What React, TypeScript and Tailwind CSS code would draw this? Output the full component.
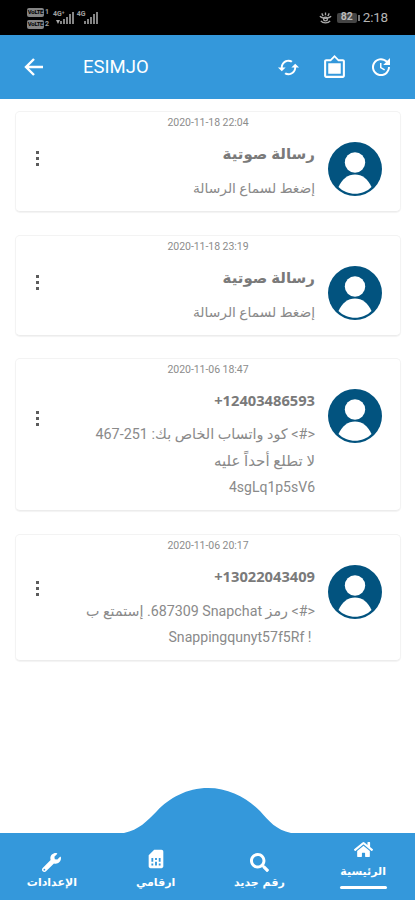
import { FaHome, FaSearch, FaWrench } from "react-icons/fa";
import { MdCached, MdFilterFrames, MdSimCard, MdUpdate } from "react-icons/md";

interface Line {
  text: string;
  size: string;
}

interface Message {
  date: string;
  title: string;
  lines: Line[];
  height: string;
  dots: string;
  phone?: boolean;
}

const messages: Message[] = [
  {
    date: "2020-11-18 22:04",
    title: "رسالة صوتية",
    lines: [{ text: "إضغط لسماع الرسالة", size: "text-[13.800px]" }],
    height: "h-[101px]",
    dots: "mt-[39px]",
  },
  {
    date: "2020-11-18 23:19",
    title: "رسالة صوتية",
    lines: [{ text: "إضغط لسماع الرسالة", size: "text-[13.800px]" }],
    height: "h-[101px]",
    dots: "mt-[39px]",
  },
  {
    date: "2020-11-06 18:47",
    title: "+12403486593",
    lines: [
      { text: "<#> كود واتساب الخاص بك: 251-467", size: "text-[14.400px]" },
      { text: "لا تطلع أحداً عليه", size: "text-[15px]" },
      { text: "4sgLq1p5sV6", size: "text-[14px]" },
    ],
    height: "h-[153px]",
    dots: "mt-[52px]",
    phone: true,
  },
  {
    date: "2020-11-06 20:17",
    title: "+13022043409",
    lines: [
      { text: "<#> رمز Snapchat \u200f687309. إستمتع ب", size: "text-[14.250px]" },
      { text: "\u00a0! Snappingqunyt57f5Rf", size: "text-[14.100px]" },
    ],
    height: "h-[127px]",
    dots: "mt-[46px]",
    phone: true,
  },
];

function Signal() {
  return (
    <svg width="14" height="12" viewBox="0 0 14 12" fill="#858585">
      <rect x="0" y="9" width="2" height="3" />
      <rect x="3" y="7" width="2" height="5" />
      <rect x="6" y="5" width="2" height="7" />
      <rect x="9" y="2" width="2" height="10" />
      <rect x="12" y="0" width="2" height="12" />
    </svg>
  );
}

function StatusBar() {
  return (
    <div className="flex h-[35px] items-center justify-between bg-black pr-[27px] pl-[27px] font-['Roboto',sans-serif] text-[#a0a0a0]">
      <div className="flex items-center">
        <div className="mt-[1px] flex w-[23px] flex-col gap-[3px] text-[7px] leading-none font-bold">
          {["1", "2"].map((n) => (
            <div key={n} className="flex items-center gap-px">
              <span className="flex h-[9px] w-[17px] items-center justify-center rounded-[2px] bg-[#858585] text-[6px] tracking-[-0.3px] text-black">VoLTE</span>
              <span>{n}</span>
            </div>
          ))}
        </div>
        <div className="ml-[3px] flex items-end">
          <span className="mr-[-9px] mb-[6px] text-[7px] leading-none font-bold">4G⁺</span>
          <svg width="4" height="4" viewBox="0 0 4 4" fill="#aaa">
            <path d="M0 0h4L2 4z" />
          </svg>
          <Signal />
        </div>
        <div className="ml-[3px] flex items-end">
          <span className="mr-[-1px] mb-[6px] text-[7px] leading-none font-bold">4G</span>
          <Signal />
        </div>
      </div>
      <div className="flex items-center">
        <svg width="13" height="12" viewBox="0 0 14 12" fill="none" stroke="#aaa" strokeWidth="1.4">
          <path d="M1 4C3 7 11 7 13 4M2 9C4 12 10 12 12 9M7 0v3M3 1l1.500 3M11 1L9.500 4" />
          <circle cx="7" cy="7" r="2" />
        </svg>
        <span className="ml-[5px] flex h-[10px] w-[20px] items-center justify-center rounded-[2px] bg-[#444] text-[10.500px] leading-none font-bold text-[#bbb]">82</span>
        <span className="ml-px h-[6px] w-[2px] bg-[#777]" />
        <span className="ml-[3px] text-[13.500px] leading-none tracking-[-0.2px] text-[#b5b5b5]">2:18</span>
      </div>
    </div>
  );
}

function Header() {
  return (
    <header className="flex h-[64px] items-center bg-[#3498db] pr-[22px] pl-[24px] text-white">
      <svg width="19" height="18" viewBox="0 0 19 18" fill="none" stroke="white" strokeWidth="2.400">
        <path d="M10 1L2 9l8 8M2 9h17" />
      </svg>
      <h1 className="mt-[2px] ml-[40px] flex-1 font-['Roboto',sans-serif] text-[18.500px]">ESIMJO</h1>
      <div className="flex items-center gap-[22px]">
        <MdCached size={23} />
        <MdFilterFrames size={25} />
        <MdUpdate size={24} />
      </div>
    </header>
  );
}

function Avatar() {
  return (
    <svg width="54" height="54" viewBox="0 0 54 54" className="shrink-0">
      <circle cx="27" cy="27" r="27" fill="#02537f" />
      <circle cx="27" cy="20.500" r="10.200" fill="#fff" />
      <path d="M10.500 45C14 37 20 32.500 27 32.500s13 4.500 16.500 12.500C35 54 19 54 10.500 45z" fill="#fff" />
    </svg>
  );
}

function MessageCard({ message }: { message: Message }) {
  return (
    <article
      className={`flex w-full flex-col rounded-[5px] border border-[#f3f3f3] border-b-[#ececec] bg-white shadow-[0_1px_1px_#f3f3f3] ${message.height}`}
    >
      <time className="mt-[3px] ml-px text-center font-['Roboto',sans-serif] text-[10.500px] leading-[16px] tracking-[-0.05px] text-[#8c8c8c]">
        {message.date}
      </time>
      <div className="mt-[-19px] flex flex-1 items-start pl-[20px]">
        <div className={`flex flex-col gap-[3px] ${message.dots}`}>
          <i className="size-[3px] bg-[#5c5c5c]" />
          <i className="size-[3px] bg-[#5c5c5c]" />
          <i className="size-[3px] bg-[#5c5c5c]" />
        </div>
        <div dir="rtl" className="mr-[12.500px] ml-auto pt-[26px] font-['Roboto','DejaVu_Sans',sans-serif] text-[#8a8a8a]">
          <h2 className="font-['Noto_Sans','DejaVu_Sans',sans-serif] text-[15px] leading-[30px] font-bold text-[#7a7a7a]">
            {message.phone ? <bdi dir="ltr" className="text-[14.700px]">{message.title}</bdi> : message.title}
          </h2>
          <div className="mt-[7px] leading-[26px] whitespace-nowrap">
            {message.lines.map((line) => (
              <p key={line.text} className={line.size}>
                {line.text}
              </p>
            ))}
          </div>
        </div>
        <div className="mt-[30px] mr-[18px]">
          <Avatar />
        </div>
      </div>
    </article>
  );
}

function BottomNav() {
  return (
    <footer className="mt-auto font-['DejaVu_Sans',sans-serif] text-[11px] font-bold text-white">
      <svg className="block" width="415" height="45" viewBox="0 0 415 45" fill="#3498db">
        <path d="M124 45C139 42 147 33 157 23C169 10 187 0 208 0S247 10 260 23C269 33 276 42 291 45z" />
      </svg>
      <nav className="grid h-[67px] grid-cols-4 bg-[#3498db] leading-[16px]">
        <div className="flex flex-col items-center pt-[20px]">
          <FaWrench size={19} />
          <span className="mt-[3px]">الإعدادات</span>
        </div>
        <div className="flex flex-col items-center pt-[15px]">
          <MdSimCard size={22} />
          <span className="mt-[5px]">ارقامي</span>
        </div>
        <div className="flex flex-col items-center pt-[20px]">
          <FaSearch size={19} />
          <span className="mt-[3px]">رقم جديد</span>
        </div>
        <div className="flex flex-col items-center pt-[7px]">
          <FaHome size={19} />
          <span className="mt-[5px]">الرئيسية</span>
          <span className="mt-[6px] h-[3px] w-[47px] rounded-full bg-white" />
        </div>
      </nav>
    </footer>
  );
}

export default function App() {
  return (
    <div className="flex h-[900px] w-[415px] flex-col overflow-hidden bg-white">
      <StatusBar />
      <Header />
      <main className="flex flex-col gap-[22.500px] px-[14.500px] pt-[12px]">
        {messages.map((message) => (
          <MessageCard key={message.date} message={message} />
        ))}
      </main>
      <BottomNav />
    </div>
  );
}
